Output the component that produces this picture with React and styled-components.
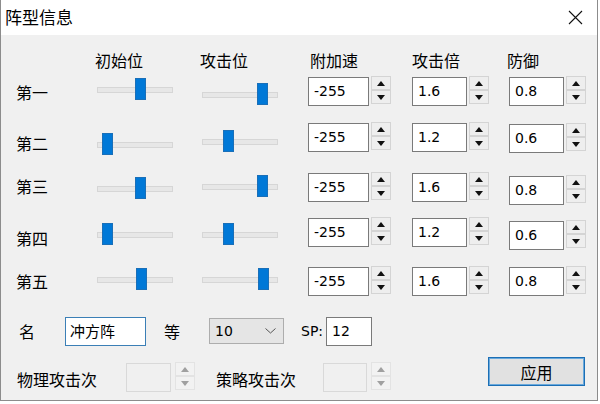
import styled, { createGlobalStyle } from "styled-components";

const GlobalStyle = createGlobalStyle`
  html, body {
    margin: 0;
    padding: 0;
    background: #ffffff;
  }
  body {
    font-family: 'Noto Sans CJK SC', 'Noto Sans', sans-serif;
    color: #000;
  }
`

const COLS = '81px 105px 106px 104px 97px 1fr'

const Window = styled.div`
  width: 596px;
  height: 400px;
  border: 1px solid #8c8c8c;
  border-top: none;
  background: #f0f0f0;
  display: flex;
  flex-direction: column;
`

const TitleBar = styled.div`
  height: 35px;
  background: #ffffff;
  display: flex;
  align-items: center;
  justify-content: space-between;
  padding: 0 14px 0 4px;
`

const Title = styled.span`
  font-size: 17px;
  line-height: 22px;
  margin-top: -1px;
`

const Body = styled.div`
  padding-left: 15px;
  display: flex;
  flex-direction: column;
`

const HeaderRow = styled.div`
  display: grid;
  grid-template-columns: ${COLS};
  height: 42px;
  padding-top: 15px;
  box-sizing: border-box;
  font-size: 16px;
  line-height: 20px;
`

const Header = styled.span`
  margin-left: ${p => p.$x}px;
`

const Row = styled.div`
  display: grid;
  grid-template-columns: ${COLS};
  align-items: start;
  height: ${p => p.$h}px;
`

const RowLabel = styled.span`
  font-size: 16px;
  line-height: 22px;
  margin-top: ${p => p.$dy}px;
`

const SliderBox = styled.div`
  position: relative;
  width: 76px;
  height: 22px;
  margin-top: ${p => p.$dy}px;
`

const Track = styled.div`
  position: absolute;
  left: 0;
  right: 0;
  top: 9px;
  height: 4px;
  background: #e7e7e7;
  border: 1px solid #d6d6d6;
`

const Thumb = styled.div`
  position: absolute;
  top: 0;
  width: 11px;
  height: 22px;
  background: #0078d7;
  box-sizing: border-box;
  border: 1px solid #1a6fb8;
`

const SpinWrap = styled.div`
  display: flex;
  align-items: flex-start;
  gap: 2px;
  margin-top: ${p => p.$dy || 0}px;
`

const NumBox = styled.div`
  width: ${p => p.$w}px;
  height: 29px;
  box-sizing: border-box;
  border: 1px solid ${p => p.$disabled ? '#d9d9d9' : '#7a7a7a'};
  background: ${p => p.$disabled ? '#f0f0f0' : '#ffffff'};
  font-family: 'DejaVu Sans', sans-serif;
  font-size: 14px;
  line-height: 26px;
  padding-left: 5px;
`

const SpinButtons = styled.div`
  display: flex;
  flex-direction: column;
  margin-top: ${p => p.$dy || 0}px;
`

const SpinBtn = styled.div`
  width: 20px;
  height: 14px;
  box-sizing: border-box;
  border: 1px solid ${p => p.$disabled ? '#e3e3e3' : '#d4d4d4'};
  background: ${p => p.$disabled ? '#f2f2f2' : '#eeeeee'};
  display: flex;
  align-items: center;
  justify-content: center;
`

const NameRow = styled.div`
  display: flex;
  align-items: flex-start;
  height: 40px;
`

const Label = styled.span`
  font-size: 16px;
  line-height: 22px;
  margin-left: ${p => p.$ml || 0}px;
  margin-top: ${p => p.$mt || 0}px;
`

const NameInput = styled.div`
  width: 81px;
  height: 29px;
  box-sizing: border-box;
  margin-left: 30px;
  border: 1px solid #3b7fb6;
  background: #ffffff;
  font-size: 15px;
  line-height: 20px;
  padding: 3px 0 0 4px;
`

const Select = styled.div`
  width: 75px;
  height: 26px;
  box-sizing: border-box;
  margin-left: 29px;
  margin-top: 1px;
  border: 1px solid #adadad;
  background: #e5e5e5;
  display: flex;
  align-items: center;
  justify-content: space-between;
  padding: 0 7px 0 5px;
  font-family: 'DejaVu Sans', sans-serif;
  font-size: 14px;
`

const SpText = styled.span`
  font-family: 'DejaVu Sans', sans-serif;
  font-size: 14px;
  line-height: 22px;
  margin-left: 17px;
  margin-top: 3px;
`

const SpBox = styled(NumBox)`
  margin-left: 3px;
`

const BottomRow = styled.div`
  display: flex;
  align-items: flex-start;
  padding-right: 12px;
`

const Field = styled.div`
  display: flex;
  align-items: flex-start;
  gap: 4px;
  margin-left: ${p => p.$ml}px;
  margin-top: 6px;
`

const ApplyButton = styled.div`
  margin-left: auto;
  width: 97px;
  height: 29px;
  box-sizing: border-box;
  border: 1px solid #1c6fb5;
  box-shadow: inset 0 0 0 1px #6aa9dc;
  background: #e1e1e1;
  display: flex;
  align-items: center;
  justify-content: center;
  font-size: 16px;
`

const Arrow = ({ up, disabled }) => (
  <svg width="8" height="5" viewBox="0 0 8 5">
    <path d={up ? 'M0 5 L4 0 L8 5 Z' : 'M0 0 L4 5 L8 0 Z'} fill={disabled ? '#a0a0a0' : '#111'} />
  </svg>
)

const Spinner = ({ disabled, dy }) => (
  <SpinButtons $dy={dy}>
    <SpinBtn $disabled={disabled}><Arrow up disabled={disabled} /></SpinBtn>
    <SpinBtn $disabled={disabled}><Arrow disabled={disabled} /></SpinBtn>
  </SpinButtons>
)

const Spin = ({ value, w, dy }) => (
  <SpinWrap $dy={dy}>
    <NumBox $w={w}>{value}</NumBox>
    <Spinner dy={-1} />
  </SpinWrap>
)

const Slider = ({ pos, dy }) => (
  <SliderBox $dy={dy}>
    <Track />
    <Thumb style={{ left: pos }} />
  </SliderBox>
)

const headers = [
  { t: '初始位', x: -2 },
  { t: '攻击位', x: -2 },
  { t: '附加速', x: 2 },
  { t: '攻击倍', x: 0 },
  { t: '防御', x: -2 },
]

const rows = [
  { name: '第一', h: 46, ly: 4, s1: 38, s1y: 1, s2: 55, s2y: 6, mul: '1.6', def: '0.8', dy: 0 },
  { name: '第二', h: 50, ly: 9, s1: 5, s1y: 10, s2: 21, s2y: 7, mul: '1.2', def: '0.6', dy: 1 },
  { name: '第三', h: 45, ly: 2, s1: 38, s1y: 4, s2: 55, s2y: 2, mul: '1.6', def: '0.8', dy: 3 },
  { name: '第四', h: 49, ly: 9, s1: 5, s1y: 5, s2: 21, s2y: 5, mul: '1.2', def: '0.6', dy: 3 },
  { name: '第五', h: 50, ly: 3, s1: 39, s1y: 1, s2: 56, s2y: 1, mul: '1.6', def: '0.8', dy: 0 },
]

export default function App() {
  return (
    <>
      <GlobalStyle />
      <Window>
        <TitleBar>
          <Title>阵型信息</Title>
          <svg width="15" height="15" viewBox="0 0 15 15">
            <path d="M1 1 L14 14 M14 1 L1 14" stroke="#111" strokeWidth="1.1" />
          </svg>
        </TitleBar>
        <Body>
          <HeaderRow>
            <span />
            {headers.map(h => <Header key={h.t} $x={h.x}>{h.t}</Header>)}
          </HeaderRow>
          {rows.map(r => (
            <Row key={r.name} $h={r.h}>
              <RowLabel $dy={r.ly}>{r.name}</RowLabel>
              <Slider pos={r.s1} dy={r.s1y} />
              <Slider pos={r.s2} dy={r.s2y} />
              <Spin value="-255" w={61} />
              <Spin value={r.mul} w={55} />
              <Spin value={r.def} w={55} dy={r.dy} />
            </Row>
          ))}
          <NameRow>
            <Label $ml={3} $mt={3}>名</Label>
            <NameInput>冲方阵</NameInput>
            <Label $ml={18} $mt={3}>等</Label>
            <Select>
              <span>10</span>
              <svg width="11" height="6" viewBox="0 0 11 6">
                <path d="M0.5 0.5 L5.5 5 L10.5 0.5" stroke="#555" fill="none" strokeWidth="1" />
              </svg>
            </Select>
            <SpText>SP:</SpText>
            <SpBox $w={46}>12</SpBox>
          </NameRow>
          <BottomRow>
            <Label $ml={1} $mt={11}>物理攻击次</Label>
            <Field $ml={29}>
              <NumBox $w={45} $disabled />
              <Spinner disabled dy={-1} />
            </Field>
            <Label $ml={21} $mt={11}>策略攻击次</Label>
            <Field $ml={27}>
              <NumBox $w={44} $disabled />
              <Spinner disabled dy={-1} />
            </Field>
            <ApplyButton>应用</ApplyButton>
          </BottomRow>
        </Body>
      </Window>
    </>
  )
}
